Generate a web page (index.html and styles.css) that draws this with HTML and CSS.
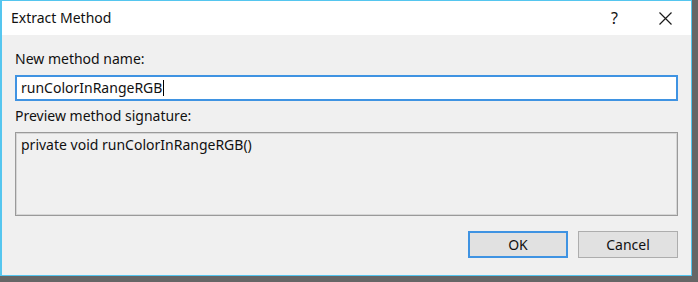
FILE: index.html
```html
<!DOCTYPE html>
<html>
<head>
    <title>Extract Method</title>
    <link rel="stylesheet" href="styles.css">
</head>
<body>
    <div class="window">
        <!-- Title bar -->
        <div class="title-bar">
            <span class="title">Extract Method</span>
            <span class="help-btn">?</span>
            <span class="close-btn">
                <svg width="13" height="13" viewBox="0 0 13 13">
                    <path d="M0.5 0.5 L12.5 12.5 M12.5 0.5 L0.5 12.5" stroke="#1a1a1a" stroke-width="1.2" fill="none"/>
                </svg>
            </span>
        </div>

        <!-- Dialog body -->
        <div class="content">
            <label class="field-label">New method name:</label>
            <div class="text-input">runColorInRangeRGB<span class="caret"></span></div>

            <label class="field-label preview-label">Preview method signature:</label>
            <div class="preview-box">private void runColorInRangeRGB()</div>

            <div class="button-row">
                <button class="btn btn-default">OK</button>
                <button class="btn">Cancel</button>
            </div>
        </div>
    </div>
</body>
</html>
```

FILE: styles.css
```css
body {
    margin: 0;
    width: 698px;
    height: 282px;
    background: #666;
    font-family: "Noto Sans", "Open Sans", sans-serif;
    font-size: 14px;
    line-height: 20px;
    color: #111;
}
.window {
    width: 692px;
    height: 276px;
    box-sizing: border-box;
    border: 1px solid #55c6ef;
    border-left-width: 2px;
    background: #f0f0f0;
    display: flex;
    flex-direction: column;
}
.title-bar {
    height: 34px;
    background: white;
    display: flex;
    align-items: center;
    padding-left: 9px;
}
.title {
    flex: 1;
}
.help-btn {
    width: 20px;
    margin-right: 28px;
    font-size: 16px;
}
.close-btn {
    display: flex;
    width: 13px;
    margin-right: 19px;
}
.content {
    flex: 1;
    display: flex;
    flex-direction: column;
    padding: 14px 13px 0 13px;
}
.field-label {
    display: block;
}
.text-input {
    margin-top: 6px;
    height: 26px;
    box-sizing: border-box;
    border: 2px solid #3f93e2;
    background: white;
    padding: 1px 4px;
    display: flex;
    align-items: center;
}
.caret {
    display: inline-block;
    width: 1px;
    height: 16px;
    margin-left: 1px;
    background: #000;
}
.preview-label {
    margin-top: 5px;
}
.preview-box {
    margin-top: 6px;
    height: 84px;
    box-sizing: border-box;
    border: 1px solid #9a9a9a;
    box-shadow: inset 0 0 0 1px #d6d6d6;
    padding: 2px 5px;
}
.button-row {
    display: flex;
    justify-content: flex-end;
    gap: 10px;
    margin-top: 15px;
}
.btn {
    width: 100px;
    height: 27px;
    box-sizing: border-box;
    background: #e1e1e1;
    border: 1px solid #adadad;
    font-family: inherit;
    font-size: 14px;
    color: #111;
    padding: 0;
}
.btn-default {
    border: 2px solid #3f93e2;
}
```
